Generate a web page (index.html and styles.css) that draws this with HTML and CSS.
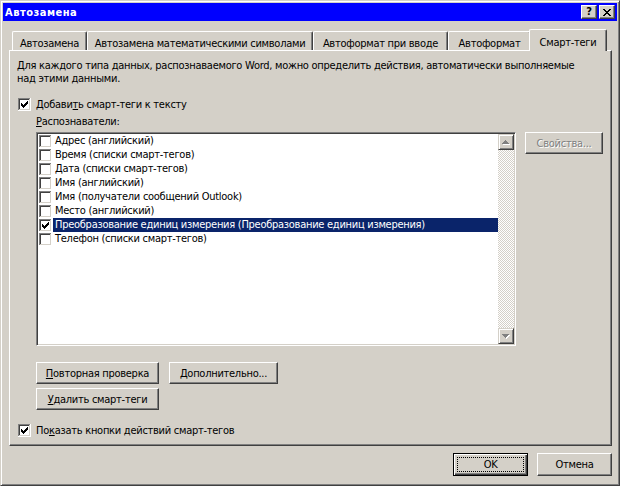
FILE: index.html
```html
<!DOCTYPE html>
<html lang="ru">
<head>
<meta charset="utf-8">
<title>Автозамена</title>
<link rel="stylesheet" href="styles.css">
</head>
<body>
<svg class="defs" width="0" height="0" aria-hidden="true">
  <defs>
    <symbol id="cbox" viewBox="0 0 13 13">
      <path fill="#808080" d="M0 0h12v1H1v11H0z"/>
      <path fill="#ffffff" d="M12 0h1v13H0v-1h12z"/>
      <path fill="#404040" d="M1 1h10v1H2v9H1z"/>
      <path fill="#d4d0c8" d="M11 1h1v11H1v-1h10z"/>
      <rect x="2" y="2" width="9" height="9" fill="#ffffff"/>
    </symbol>
    <symbol id="cmark" viewBox="0 0 13 13">
      <path fill="#000" d="M3 5h1v3H3zM4 6h1v3H4zM5 7h1v3H5zM6 6h1v3H6zM7 5h1v3H7zM8 4h1v3H8zM9 3h1v3H9z"/>
    </symbol>
  </defs>
</svg>
<div class="win">
  <div class="titlebar">
    <span class="title">Автозамена</span>
    <div class="tbtns">
      <span class="tbtn qm">?</span>
      <span class="tbtn">
        <svg width="8" height="7" viewBox="0 0 8 7" shape-rendering="crispEdges"><path fill="#000" d="M0 0h2v1H0zM6 0h2v1H6zM1 1h2v1H1zM5 1h2v1H5zM2 2h4v1H2zM3 3h2v1H3zM2 4h4v1H2zM1 5h2v1H1zM5 5h2v1H5zM0 6h2v1H0zM6 6h2v1H6z"/></svg>
      </span>
    </div>
  </div>

  <div class="tabs">
    <div class="tab t1">Автозамена</div>
    <div class="tab t2">Автозамена математическими символами</div>
    <div class="tab t3">Автоформат при вводе</div>
    <div class="tab t4">Автоформат</div>
    <div class="tab t5 sel">Смарт-теги</div>
  </div>

  <div class="panel">
    <p class="desc">Для каждого типа данных, распознаваемого Word, можно определить действия, автоматически выполняемые<br>над этими данными.</p>

    <div class="chkrow first">
      <svg class="cb" width="13" height="13" shape-rendering="crispEdges"><use href="#cbox"/><use href="#cmark"/></svg>
      <span class="lbl">Добави<u>т</u>ь смарт-теги к тексту</span>
    </div>

    <div class="caption"><u>Р</u>аспознаватели:</div>

    <div class="listrow">
      <div class="list">
        <div class="items">
          <div class="row"><svg class="cb" width="13" height="13" shape-rendering="crispEdges"><use href="#cbox"/></svg><span class="rt">Адрес (английский)</span></div>
          <div class="row"><svg class="cb" width="13" height="13" shape-rendering="crispEdges"><use href="#cbox"/></svg><span class="rt">Время (списки смарт-тегов)</span></div>
          <div class="row"><svg class="cb" width="13" height="13" shape-rendering="crispEdges"><use href="#cbox"/></svg><span class="rt">Дата (списки смарт-тегов)</span></div>
          <div class="row"><svg class="cb" width="13" height="13" shape-rendering="crispEdges"><use href="#cbox"/></svg><span class="rt">Имя (английский)</span></div>
          <div class="row"><svg class="cb" width="13" height="13" shape-rendering="crispEdges"><use href="#cbox"/></svg><span class="rt">Имя (получатели сообщений Outlook)</span></div>
          <div class="row"><svg class="cb" width="13" height="13" shape-rendering="crispEdges"><use href="#cbox"/></svg><span class="rt">Место (английский)</span></div>
          <div class="row"><svg class="cb" width="13" height="13" shape-rendering="crispEdges"><use href="#cbox"/><use href="#cmark"/></svg><span class="rt hl">Преобразование единиц измерения (Преобразование единиц измерения)</span></div>
          <div class="row"><svg class="cb" width="13" height="13" shape-rendering="crispEdges"><use href="#cbox"/></svg><span class="rt">Телефон (списки смарт-тегов)</span></div>
        </div>
        <div class="sb">
          <div class="sbtn">
            <svg width="8" height="5" viewBox="0 0 8 5" shape-rendering="crispEdges"><path fill="#fff" d="M4 1h1v1H4zM3 2h3v1H3zM2 3h5v1H2zM1 4h7v1H1z"/><path fill="#808080" d="M3 0h1v1H3zM2 1h3v1H2zM1 2h5v1H1zM0 3h7v1H0z"/></svg>
          </div>
          <div class="track"></div>
          <div class="sbtn">
            <svg width="8" height="5" viewBox="0 0 8 5" shape-rendering="crispEdges"><path fill="#fff" d="M1 1h7v1H1zM2 2h5v1H2zM3 3h3v1H3zM4 4h1v1H4z"/><path fill="#808080" d="M0 0h7v1H0zM1 1h5v1H1zM2 2h3v1H2zM3 3h1v1H3z"/></svg>
          </div>
        </div>
      </div>
      <div class="btn props disabled">Свойства...</div>
    </div>

    <div class="btnrow">
      <div class="btn b1"><span><u>П</u>овторная проверка</span></div>
      <div class="btn b2"><span><u>Д</u>ополнительно...</span></div>
    </div>
    <div class="btnrow second">
      <div class="btn b1"><span><u>У</u>далить смарт-теги</span></div>
    </div>

    <div class="chkrow last">
      <svg class="cb" width="13" height="13" shape-rendering="crispEdges"><use href="#cbox"/><use href="#cmark"/></svg>
      <span class="lbl">По<u>к</u>азать кнопки действий смарт-тегов</span>
    </div>
  </div>

  <div class="footer">
    <div class="btn def"><span class="focus">OK</span></div>
    <div class="btn cancel">Отмена</div>
  </div>
</div>
</body>
</html>
```

FILE: styles.css
```css
* { box-sizing: border-box; }
html, body { margin: 0; padding: 0; }
body {
  background: #d4d0c8;
  font-family: "DejaVu Sans Condensed", "Liberation Sans", sans-serif;
  font-size: 11px;
  line-height: 13px;
  letter-spacing: -0.27px;
  color: #000;
}
.defs { position: absolute; width: 0; height: 0; }
u { text-decoration: underline; text-underline-offset: 1px; }

.win {
  width: 620px;
  height: 486px;
  border: 1px solid;
  border-color: #d4d0c8 #404040 #404040 #d4d0c8;
  box-shadow: inset 1px 1px #fff, inset -1px -1px #808080;
  padding: 2px;
  background: #d4d0c8;
  display: flex;
  flex-direction: column;
}

.titlebar {
  flex: none;
  height: 18px;
  background: #0000ff;
  display: flex;
  align-items: center;
  padding: 0 2px 0 2px;
}
.title { flex: 1; color: #fff; font-weight: bold; letter-spacing: 0.5px; }
.tbtns { display: flex; gap: 2px; }
.tbtn {
  width: 16px;
  height: 14px;
  background: #d4d0c8;
  border: 1px solid;
  border-color: #fff #404040 #404040 #fff;
  box-shadow: inset -1px -1px #808080;
  display: flex;
  align-items: center;
  justify-content: center;
}
.qm { font-weight: bold; font-size: 11px; line-height: 12px; letter-spacing: 0; }

.tabs {
  flex: none;
  display: flex;
  align-items: flex-end;
  height: 21px;
  margin: 8px 0 0 9px;
  position: relative;
  z-index: 1;
}
.tab {
  height: 19px;
  border-top: 1px solid #fff;
  border-left: 1px solid #fff;
  border-right: 1px solid #404040;
  box-shadow: inset -1px 0 #808080;
  border-radius: 2px 2px 0 0;
  padding-top: 5px;
  text-align: center;
  white-space: nowrap;
  background: #d4d0c8;
}
.t1 { width: 75px; }
.t2 { width: 226px; }
.t3 { width: 135px; }
.t4 { width: 83px; }
.t5 { width: 78px; }
.tab.sel {
  height: 22px;
  margin: 0 -2px -1px -2px;
  padding-top: 6px;
  position: relative;
  z-index: 2;
}

.panel {
  flex: none;
  margin-left: 6px;
  width: 603px;
  height: 396px;
  border-top: 1px solid #fff;
  border-left: 1px solid #fff;
  border-right: 1px solid #404040;
  border-bottom: 1px solid #404040;
  box-shadow: inset -1px -1px #808080;
}
.desc { margin: 8px 0 0 7px; white-space: nowrap; }

.chkrow { display: flex; align-items: center; height: 13px; margin-left: 8px; }
.chkrow.first { margin-top: 13px; }
.chkrow.last { margin-top: 14px; }
.cb { flex: none; display: block; }
.lbl { margin-left: 5px; }

.caption { margin: 4px 0 0 26px; }

.listrow { display: flex; align-items: flex-start; margin: 4px 0 0 26px; }
.list {
  width: 480px;
  height: 214px;
  border: 1px solid;
  border-color: #808080 #fff #fff #808080;
  box-shadow: inset 1px 1px #404040, inset -1px -1px #d4d0c8;
  padding: 1px;
  background: #fff;
  display: flex;
}
.items { width: 460px; }
.row { display: flex; height: 14px; }
.row .cb { margin: 1px 0 0 1px; }
.rt {
  flex: 1;
  margin-left: 1px;
  padding-left: 2px;
  line-height: 14px;
  white-space: nowrap;
}
.rt.hl { background: #0a246a; color: #fff; }

.sb { width: 16px; display: flex; flex-direction: column; }
.sbtn {
  flex: none;
  width: 16px;
  height: 16px;
  background: #d4d0c8;
  border: 1px solid;
  border-color: #d4d0c8 #404040 #404040 #d4d0c8;
  box-shadow: inset 1px 1px #fff, inset -1px -1px #808080;
  display: flex;
  align-items: center;
  justify-content: center;
}
.track {
  flex: 1;
  background-image: conic-gradient(#fff 25%, #d4d0c8 0 50%, #fff 0 75%, #d4d0c8 0);
  background-size: 2px 2px;
}

.btn {
  height: 22px;
  background: #d4d0c8;
  border: 1px solid;
  border-color: #fff #404040 #404040 #fff;
  box-shadow: inset -1px -1px #808080;
  display: flex;
  align-items: center;
  justify-content: center;
  white-space: nowrap;
}
.props { width: 78px; margin-left: 9px; }
.disabled { color: #808080; text-shadow: 1px 1px 0 #fff; }

.btnrow { display: flex; gap: 10px; margin: 16px 0 0 26px; }
.btnrow.second { margin-top: 4px; }
.b1 { width: 123px; }
.b2 { width: 109px; }

.footer {
  flex: none;
  display: flex;
  justify-content: flex-end;
  gap: 9px;
  margin: 7px 5px 0 0;
}
.footer .btn { width: 75px; height: 23px; }
.btn.def {
  border: 1px solid #000;
  box-shadow: inset 1px 1px #fff, inset -1px -1px #404040, inset -2px -2px #808080;
  padding: 3px;
}
.focus {
  flex: 1;
  align-self: stretch;
  border: 1px dotted #000;
  display: flex;
  align-items: center;
  justify-content: center;
}
```
